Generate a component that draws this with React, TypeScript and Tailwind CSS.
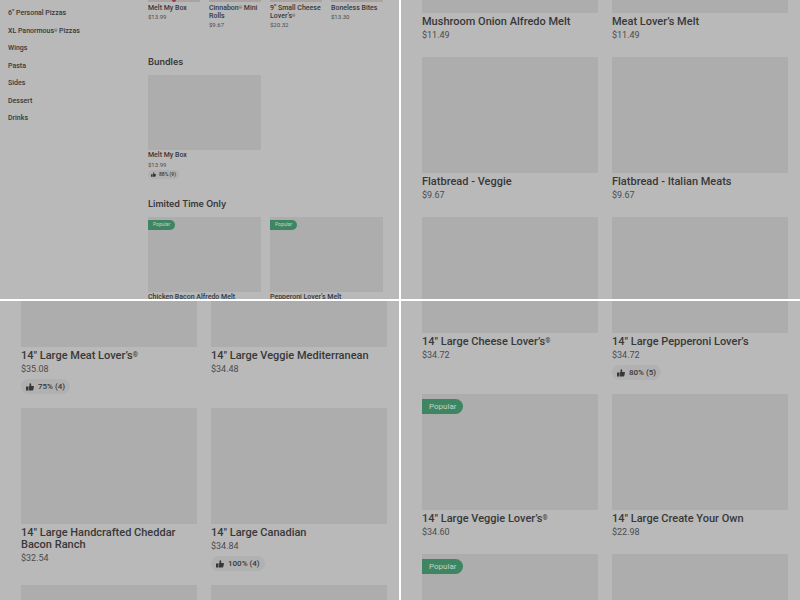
import React from 'react';
import clsx from 'clsx';

interface MenuItem {
  name: string;
  price: string;
  rating?: string;
  popular?: boolean;
}

const categories = ['6" Personal Pizzas', 'XL Panormous® Pizzas', 'Wings', 'Pasta', 'Sides', 'Dessert', 'Drinks'];

const featured: MenuItem[] = [
  { name: 'Melt My Box', price: '$13.99' },
  { name: 'Cinnabon® Mini Rolls', price: '$9.67' },
  { name: '9" Small Cheese Lover’s®', price: '$20.32' },
  { name: 'Boneless Bites', price: '$13.30' },
];

const bundles: MenuItem[] = [{ name: 'Melt My Box', price: '$13.99', rating: '88% (9)' }];

const limited: MenuItem[] = [
  { name: 'Chicken Bacon Alfredo Melt', price: '$11.49', popular: true },
  { name: 'Pepperoni Lover’s Melt', price: '$11.49', popular: true },
];

const melts: MenuItem[] = [
  { name: 'Mushroom Onion Alfredo Melt', price: '$11.49' },
  { name: 'Meat Lover’s Melt', price: '$11.49' },
  { name: 'Flatbread - Veggie', price: '$9.67' },
  { name: 'Flatbread - Italian Meats', price: '$9.67' },
  { name: '', price: '' },
  { name: '', price: '' },
];

const specialty: MenuItem[] = [
  { name: '14" Large Meat Lover’s®', price: '$35.08', rating: '75% (4)' },
  { name: '14" Large Veggie Mediterranean', price: '$34.48' },
  { name: '14" Large Handcrafted Cheddar Bacon Ranch', price: '$32.54' },
  { name: '14" Large Canadian', price: '$34.84', rating: '100% (4)' },
  { name: '', price: '' },
  { name: '', price: '' },
];

const large: MenuItem[] = [
  { name: '14" Large Cheese Lover’s®', price: '$34.72' },
  { name: '14" Large Pepperoni Lover’s', price: '$34.72', rating: '80% (5)' },
  { name: '14" Large Veggie Lover’s®', price: '$34.60', popular: true },
  { name: '14" Large Create Your Own', price: '$22.98' },
  { name: '', price: '', popular: true },
  { name: '', price: '' },
];

const ThumbIcon = ({ className }: { className: string }) => (
  <svg viewBox="0 0 16 16" fill="currentColor" className={className} aria-hidden="true">
    <path d="M0 7h4v8H0zM5 7l2-1V2.2C7 1 7.6.5 8.6.5c1.1 0 1.8.8 1.8 1.9V6H15c.8 0 1.1.6.9 1.4l-1.3 6.2c-.2.9-.8 1.4-1.7 1.4H5z" />
  </svg>
);

// the registered mark is set smaller than the rest of the name
const Name = ({ text }: { text: string }) => (
  <>
    {text.split('®').map((part, i) => (
      <React.Fragment key={i}>
        {i > 0 && <span className="align-[30%] text-[0.6em] leading-none">®</span>}
        {part}
      </React.Fragment>
    ))}
  </>
);

const Card = ({ item, small }: { item: MenuItem; small?: boolean }) => (
  <article>
    <div className={clsx('relative bg-[#adadad]', small ? 'h-[75px]' : 'h-[116px]')}>
      {item.popular && (
        <span
          className={clsx(
            'absolute left-0 flex items-center rounded-r-full bg-[#3e8562] text-[#c3d2ca]',
            small ? 'top-[3px] h-[10px] px-[5px] text-[5px]' : 'top-[5px] h-[15px] px-[7px] text-[8px]'
          )}
        >
          Popular
        </span>
      )}
    </div>
    {item.name && (
      <>
        <h3 className={clsx('font-medium', small ? 'pt-px text-[7px] leading-[9px]' : 'pt-[3px] text-[11px] leading-3')}>
          <Name text={item.name} />
        </h3>
        <p className={clsx('text-[#4c4c4c]', small ? 'text-[6px] leading-[9px]' : 'text-[9px] leading-[15px]')}>{item.price}</p>
      </>
    )}
    {item.rating && (
      <span
        className={clsx(
          'flex w-fit items-center rounded-full bg-[#b1b1b1] font-medium',
          small ? 'mt-px h-[9px] gap-[3px] px-[3px] text-[5px]' : 'mt-0.5 h-[15px] gap-1 px-[5px] text-[8px]'
        )}
      >
        <ThumbIcon className={small ? 'size-[5px]' : 'size-2'} />
        {item.rating}
      </span>
    )}
  </article>
);

const CardGrid = ({ items, className }: { items: MenuItem[]; className: string }) => (
  <section className={clsx('overflow-hidden bg-[#b9b9b9] pr-3 pl-[21px]', className)}>
    <div className="grid grid-cols-2 gap-[14px]">
      {items.map((item, i) => (
        <Card key={i} item={item} />
      ))}
    </div>
  </section>
);

const Overview: React.FC = () => (
  <section className="flex overflow-hidden bg-[#b9b9b9] pr-4">
    <nav className="flex h-[126px] w-[148px] shrink-0 flex-col justify-between pt-[6px] pl-2">
      {categories.map((name) => (
        <a key={name} href="#" className="text-[7px] leading-[15px] font-medium">
          <Name text={name} />
        </a>
      ))}
    </nav>
    <div className="min-w-0 flex-1">
      <div className="grid h-[56px] grid-cols-4 gap-[9px]">
        {featured.map((item) => (
          <article key={item.name}>
            <div className="flex h-[2px] justify-center bg-[#aaa3a0]">
              {item.name === 'Melt My Box' && <div className="w-1 rounded-b-full bg-[#98354f]" />}
            </div>
            <h3 className="pt-0.5 text-[7px] leading-2 font-medium">
              <Name text={item.name} />
            </h3>
            <p className="text-[6px] leading-[9px] text-[#4c4c4c]">{item.price}</p>
          </article>
        ))}
      </div>
      <h2 className="mb-[7px] font-['Inter',sans-serif] text-[9px] leading-3 font-semibold">Bundles</h2>
      <div className="grid grid-cols-2 gap-[9px]">
        {bundles.map((item) => (
          <Card key={item.name} item={item} small />
        ))}
      </div>
      <h2 className="mt-[19px] mb-[7px] font-['Inter',sans-serif] text-[9px] leading-3 font-semibold">Limited Time Only</h2>
      <div className="grid grid-cols-2 gap-[9px]">
        {limited.map((item) => (
          <Card key={item.name} item={item} small />
        ))}
      </div>
    </div>
  </section>
);

export default function App() {
  return (
    <main className="grid h-screen grid-cols-2 grid-rows-2 gap-0.5 bg-white font-['Roboto',sans-serif] text-[#383838]">
      <Overview />
      <CardGrid items={melts} className="[&>div]:-mt-[103px]" />
      <CardGrid items={specialty} className="[&>div]:-mt-[70px]" />
      <CardGrid items={large} className="[&>div]:-mt-[84px]" />
    </main>
  );
}
